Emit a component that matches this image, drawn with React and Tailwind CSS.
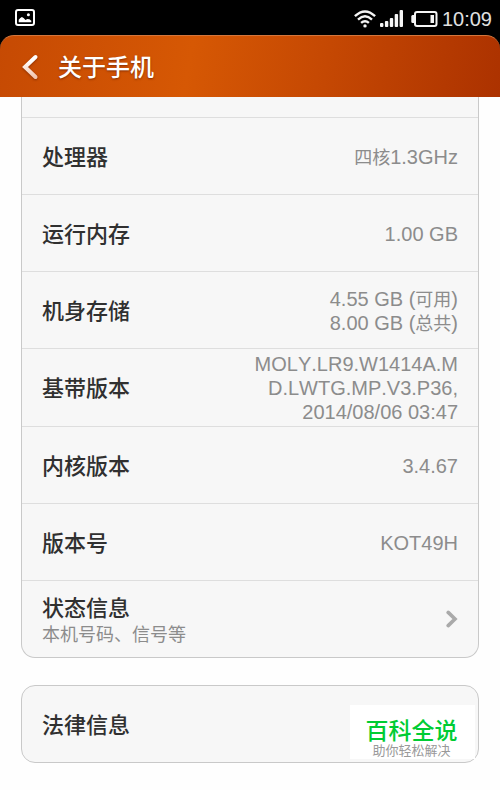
const CJK = "font-['Liberation_Sans','Noto_Sans_CJK_SC',sans-serif]";

const specs = [
  { label: "处理器", lines: [[{ cjk: "四核" }, "1.3GHz"]] },
  { label: "运行内存", lines: [["1.00 GB"]] },
  {
    label: "机身存储",
    lines: [
      ["4.55 GB (", { cjk: "可用" }, ")"],
      ["8.00 GB (", { cjk: "总共" }, ")"],
    ],
  },
  { label: "基带版本", lines: [["MOLY.LR9.W1414A.M"], ["D.LWTG.MP.V3.P36,"], ["2014/08/06 03:47"]] },
  { label: "内核版本", lines: [["3.4.67"]] },
  { label: "版本号", lines: [["KOT49H"]] },
];

function StatusBar() {
  return (
    <div className="flex h-[35px] items-center justify-between bg-black pr-2 pl-[15px] text-white">
      <svg width="20" height="17" viewBox="0 0 20 17" fill="none" aria-hidden="true">
        <rect x="1" y="1" width="18" height="15" rx="2" stroke="#fff" strokeWidth="2" />
        <path d="M3.7 13.3v-2.6l1.6-1.8 1.6-.8 1.7.8 1.9 2.1 1.7-.9 2.3.1 1.8 1.5v1.600z" fill="#fff" />
        <circle cx="13.4" cy="5.8" r="1.5" fill="#fff" />
      </svg>
      <div className="flex items-center pt-0.5">
        <svg width="22" height="18" viewBox="0 0 22 18" fill="none" stroke="#f5f5f5" aria-hidden="true">
          <path d="M.9 6.2Q11-3.4 21.1 6.2" strokeWidth="2.4" />
          <path d="M4 9.6q7-6.5 14 0" strokeWidth="2.4" />
          <path d="M7.1 12.9q3.9-3.5 7.8 0" strokeWidth="2.4" />
          <circle cx="11" cy="15.9" r="1.7" fill="#f5f5f5" stroke="none" />
        </svg>
        <svg className="ml-1" width="23" height="17" viewBox="0 0 23 17" fill="#f5f5f5" aria-hidden="true">
          <rect x="0" y="13" width="3.400" height="4" rx="1" />
          <rect x="4.900" y="11" width="3.400" height="6" rx="1" />
          <rect x="9.800" y="8" width="3.400" height="9" rx="1" />
          <rect x="14.700" y="4" width="3.400" height="13" rx="1" />
          <rect x="19.600" y="0" width="3.400" height="17" rx="1" />
        </svg>
        <svg className="ml-2" width="27" height="16" viewBox="0 0 27 16" fill="none" aria-hidden="true">
          <rect x="4" y="1" width="21.500" height="14" rx="2" stroke="#f5f5f5" strokeWidth="2" />
          <path d="M3 4H1.500Q.3 4 .3 5.500V10.500Q.3 12 1.500 12H3z" fill="#f5f5f5" />
          <rect x="19.500" y="4" width="3.500" height="8" fill="#f5f5f5" />
        </svg>
        <time className="ml-1 text-[20px] leading-6 text-[#e0e0e0]">10:09</time>
      </div>
    </div>
  );
}

function Header() {
  return (
    <div className="bg-black">
      <header className="flex h-[62px] items-center rounded-t-[14px] border-t border-[#d4763c] bg-linear-[100deg,#c64a03_0%,#d65804_38%,#c54803_65%,#ac3200_100%] pl-5 text-white">
        <button type="button" aria-label="返回" className="flex h-10 w-[38px] items-center">
          <svg className="drop-shadow-[0_1px_1px_rgba(80,20,0,0.5)]" width="20" height="28" viewBox="0 0 20 28" fill="none" aria-hidden="true">
            <defs>
              <linearGradient id="arrow" x1="0" y1="0" x2="0" y2="1">
                <stop offset=".2" stopColor="#fff" />
                <stop offset="1" stopColor="#f3c5ae" />
              </linearGradient>
            </defs>
            <path d="M15.500 4 5 14l10.500 10" stroke="url(#arrow)" strokeWidth="4" strokeLinecap="round" strokeLinejoin="miter" />
          </svg>
        </button>
        <h1 className="pt-0.5 text-[24px] leading-8 font-medium text-shadow-[0_1px_2px_rgba(80,20,0,0.6)]">关于手机</h1>
      </header>
    </div>
  );
}

function SpecRow({ label, lines }) {
  return (
    <div className="flex min-h-[77px] items-center justify-between border-t border-[#dedede] px-5 pt-[3px] pb-0.5">
      <dt className="pt-0.5 text-[22px] leading-8 font-medium text-[#303030]">{label}</dt>
      <dd className="text-right text-[20px] leading-6 text-[#8c8c8c] [font-kerning:none]">
        {lines.map((parts, i) => (
          <div key={i} className="h-6 whitespace-nowrap">
            {parts.map((part, j) =>
              typeof part === "string" ? part : <span key={j} className="text-[18px]">{part.cjk}</span>
            )}
          </div>
        ))}
      </dd>
    </div>
  );
}

export default function App() {
  return (
    <div lang="zh-CN" className={`relative min-h-screen bg-[#fefefe] ${CJK}`}>
      <StatusBar />
      <Header />
      <main className="px-[21px] pb-6">
        <section className="overflow-hidden rounded-b-[14px] border-x border-b border-[#c9c9c9] bg-[#f7f7f7]">
          <dl className="pt-5">
            {specs.map((spec) => (
              <SpecRow key={spec.label} {...spec} />
            ))}
          </dl>
          <button type="button" className="flex h-[77px] w-full items-center justify-between border-t border-[#dedede] px-5 text-left">
            <span className="flex flex-col pt-1">
              <span className="text-[22px] leading-7 font-medium text-[#303030]">状态信息</span>
              <span className="text-[18px] leading-6 text-[#8c8c8c]">本机号码、信号等</span>
            </span>
            <svg width="12" height="18" viewBox="0 0 12 18" fill="none" aria-hidden="true">
              <path d="M2.200 2.400 9 9l-6.800 6.600" stroke="#aaa" strokeWidth="3.600" strokeLinecap="round" />
            </svg>
          </button>
        </section>
        <section className="relative mt-[27px]">
          <button type="button" className="flex h-[78px] w-full items-center rounded-[14px] border border-[#c9c9c9] bg-[#f7f7f7] px-5 pt-1">
            <span className="text-[22px] leading-8 font-medium text-[#303030]">法律信息</span>
          </button>
          <aside className="absolute top-5 right-1 flex h-[54px] w-[125px] flex-col items-center bg-white pt-3.5 pr-0.5">
            <strong className="text-[23px] leading-6 font-medium text-[#00cc33]">百科全说</strong>
            <span className="text-[13px] leading-4 text-[#999]">助你轻松解决</span>
          </aside>
        </section>
      </main>
    </div>
  );
}
